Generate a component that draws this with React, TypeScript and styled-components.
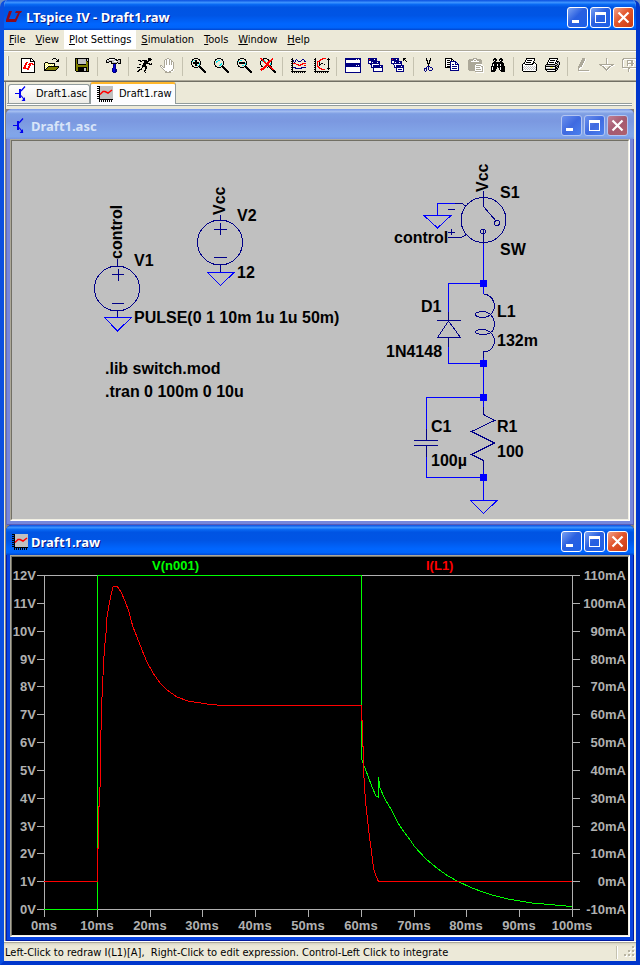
import React from "react";
import styled, { createGlobalStyle, css } from "styled-components";

const GlobalStyle = createGlobalStyle`
  * { box-sizing: border-box; }
  body { margin: 0; background: #6f8fc4; }
  button { font: inherit; color: inherit; margin: 0; padding: 0; border: 0; background: none; }
`;

const Frame = styled.div`
  min-height: 100vh;
  display: flex;
  flex-direction: column;
  overflow: hidden;
  border-radius: 7px 7px 0 0;
  border-style: solid;
  border-width: 0 4px 4px;
  border-color: transparent #0036cc #0036cc #0a4fe0;
  background: #ece9d8;
  font: 11px/14px "DejaVu Sans Condensed", "DejaVu Sans", sans-serif;
  color: #000;
`;

const TitleBar = styled.header<{ $inactive?: boolean; $main?: boolean }>`
  height: 30px;
  display: flex;
  align-items: center;
  gap: ${(p) => (p.$main ? "4px" : "3px")};
  margin: ${(p) => (p.$main ? "0 -4px" : "0")};
  padding: ${(p) => (p.$main ? "4px" : "3px")} 6px 0;
  color: ${(p) => (p.$inactive ? "#d8e4f8" : "#fff")};
  text-shadow: ${(p) => (p.$inactive ? "none" : "1px 1px 0 #0a1883")};
  background: ${(p) =>
    p.$inactive
      ? "linear-gradient(#7697e7 0, #a3bdf0 8%, #7e9ee3 16%, #7b98e0 40%, #82a5e8 80%, #7fa5ea 92%, #7995df)"
      : "linear-gradient(#0a4fe0 0, #3d95ff 9%, #0a6cf5 14%, #0054e3 24%, #0055e5 52%, #0066ff 80%, #0064fa 92%, #0046d0)"};
`;

const TitleText = styled.h1`
  flex: 1;
  margin: 0;
  font: bold 13px/18px "Noto Sans", "Open Sans", sans-serif;
  white-space: nowrap;
`;

const Controls = styled.div`
  display: flex;
  gap: 2px;
`;

const ControlButton = styled.button<{ $kind: "plain" | "close"; $inactive?: boolean }>`
  width: 21px;
  height: 21px;
  display: block;
  border-radius: 3px;
  border: 1px solid ${(p) => (p.$inactive ? "#b4c6f2" : "#fff")};
  background: ${(p) => {
    if (p.$kind === "close")
      return p.$inactive
        ? "linear-gradient(135deg, #c08094, #a45a70 50%, #b0606c)"
        : "linear-gradient(135deg, #f0a088, #e2552c 45%, #cc3a10)";
    return p.$inactive
      ? "linear-gradient(135deg, #6b90ec, #3f6ae0 50%, #4a80ee)"
      : "linear-gradient(135deg, #7ba2f2, #2a60e0 45%, #1c60e8)";
  }};
  svg { display: block; }
`;

const MenuBar = styled.nav`
  height: 20px;
  display: flex;
  align-items: stretch;
`;

const MenuItem = styled.button<{ $open?: boolean }>`
  height: 19px;
  padding: 0 5px;
  white-space: nowrap;
  background: ${(p) => (p.$open ? "#fff" : "transparent")};
  &::first-letter { text-decoration: underline; }
`;

const Toolbar = styled.div`
  height: 32px;
  display: flex;
  align-items: center;
  overflow: hidden;
  padding-left: 3px;
  border: solid #aca899;
  border-width: 1px 0;
  box-shadow: inset 0 1px 0 #fff, inset 0 -1px 0 #aca899;
  border-bottom-color: #716f64;
`;

const Grip = styled.div`
  flex: none;
  width: 2px;
  height: 20px;
  margin-right: 9px;
  border-left: 1px solid #fff;
  border-right: 1px solid #aca899;
`;

const ToolButton = styled.button`
  flex: none;
  width: 23px;
  height: 22px;
  padding-left: 3px;
  svg { display: block; }
`;

const ToolDivider = styled.div`
  flex: none;
  width: 8px;
  height: 19px;
  border-left: 2px solid transparent;
  background: linear-gradient(90deg, #c5c2b0 1px, transparent 1px) content-box;
`;

const Workspace = styled.main`
  flex: 1;
  margin: 0 1px;
  border-left: 1px solid #808080;
  border-right: 1px solid #f1efe2;
`;

const TabStrip = styled.div`
  height: 24px;
  display: flex;
  align-items: flex-end;
  margin: 0 2px 3px 1px;
  padding-left: 1px;
  border-bottom: 1px solid #919b9c;
  box-shadow: inset 0 -1px 0 #fff, inset 0 -2px 0 #919b9c;
`;

const Tab = styled.button<{ $active?: boolean }>`
  height: 19px;
  width: 82px;
  display: flex;
  align-items: center;
  gap: 6px;
  padding-left: 5px;
  margin-bottom: 2px;
  white-space: nowrap;
  border: 1px solid #919b9c;
  border-bottom: 0;
  border-radius: 3px 3px 0 0;
  background: linear-gradient(#fff, #ecebe6);
  ${(p) =>
    p.$active &&
    css`
      height: 22px;
      width: 86px;
      padding-left: 6px;
      margin-bottom: 1px;
      background: #fcfcfe;
      border-top: 2px solid #ffb62a;
    `}
`;

const MdiArea = styled.div`
  background: #808080;
`;

const Child = styled.section<{ $inactive?: boolean }>`
  border-radius: 6px 6px 0 0;
  overflow: hidden;
  background: ${(p) => (p.$inactive ? "#7586dc" : "#0843e0")};
  box-shadow: inset 1px 0 0 ${(p) => (p.$inactive ? "#5d6ac8" : "#0019b0")},
    inset -1px -1px 0 ${(p) => (p.$inactive ? "#5a5cb8" : "#0019a0")};
`;

const ChildBody = styled.div<{ $dark?: boolean }>`
  margin: 0 4px 4px;
  border: 1px solid;
  border-color: #aca899 #fff #fff #aca899;
  background: ${(p) => (p.$dark ? "#000" : "#c0c0c0")};
`;

const Sunken = styled.div`
  border: 1px solid;
  border-color: #716f64 #f1efe2 #f1efe2 #716f64;
`;

const Canvas = styled.svg`
  display: block;
  width: 100%;
  height: auto;
`;

const SchematicLabel = styled.text`
  font: bold 16px "Liberation Sans", Arial, sans-serif;
  fill: #000;
`;

const PlotLabel = styled.text<{ $color?: string }>`
  font: bold 13px "Liberation Sans", Arial, sans-serif;
  fill: ${(p) => p.$color || "#b0b0b0"};
`;

const StatusBar = styled.footer`
  height: 20px;
  display: flex;
  align-items: center;
  justify-content: space-between;
  padding: 3px 0 1px 1px;
  white-space: pre;
  border-top: 1px solid #fff;
  box-shadow: inset 0 1px 0 #aca899, inset 0 3px 3px -1px #cfccba;
`;

const StatusEnd = styled.div`
  display: flex;
  gap: 6px;
`;

const StatusRule = styled.div`
  width: 2px;
  height: 13px;
  border-left: 1px solid #c5c2b0;
  border-right: 1px solid #fff;
`;

const PALETTE: Record<string, string> = {
  k: "#000", n: "#000080", r: "#f00", w: "#fff", y: "#ffff60", o: "#808000",
  g: "#808080", s: "#c0c0c0", c: "#00e8f0", b: "#0000e0", t: "#aca899",
};

function PixelIcon({ rows }: { rows: string[] }) {
  const rects: React.ReactNode[] = [];
  rows.forEach((row, y) => {
    let x = 0;
    while (x < row.length) {
      const c = row[x];
      let end = x + 1;
      while (end < row.length && row[end] === c) end++;
      if (PALETTE[c]) rects.push(<rect key={`${x}-${y}`} x={x} y={y} width={end - x} height={1} fill={PALETTE[c]} />);
      x = end;
    }
  });
  return (
    <svg width="16" height="16" viewBox="0 0 16 16" shapeRendering="crispEdges" aria-hidden="true">
      {rects}
    </svg>
  );
}

const lens = (inside: string[]) => [
  "...kkkk.........",
  ".kk....kk.......",
  ".k" + inside[0] + "k.......",
  "k" + inside[1] + "k......",
  "k" + inside[2] + "k......",
  "k" + inside[3] + "k......",
  "k" + inside[4] + "k......",
  ".k" + inside[5] + "k.......",
  ".kk....kkk......",
  "...kkkk.kkk.....",
  ".........kkk....",
  "..........kkk...",
  "...........kkk..",
  "............kkk.",
  ".............kk.",
];

const ICONS: Record<string, string[]> = {
  new: [
    "kkkkkkkkkkk.....", "kwwwwwwwwkwk....", "kwwwwwwwwkwwk...", "kwwwwwwwwkkkkk..",
    "kwwwwrrwwwwwwk..", "kwwwrrwwrrrrwk..", "kwwwrrwrrrwrrk..", "kwwrrwwwrrwwwk..",
    "kwwrrwwrrwwwwk..", "kwrrrwwrrwwwwk..", "kwrrrrrrwwwwwk..", "kwwwwwrrwwwwwk..",
    "kwwwwwwwwwwwwk..", "kwwwwwwwwwwwwk..", "kkkkkkkkkkkkkk..",
  ],
  open: [
    ".........kkk....", "........k...k.k.", ".............kk.", "............kkk.",
    ".kkk............", "kywykkkkkkk.....", "kwywywywywk.....", "kywywywywyk.....",
    "kwywkkkkkkkkkkk.", "kywkooooooooook.", "kwkooooooooook..", "kkooooooooook...",
    "kkkkkkkkkkkk....",
  ],
  save: [
    "kkkkkkkkkkkkkk..", "kokssssssssksk..", "kokssssssssksk..", "kokssssssssokk..",
    "kokssssssssook..", "kokssssssssook..", "kookkkkkkkkook..", "kooooooooooook..",
    "kooooooooooook..", "kookkkkkkkkkok..", "kookkkkkksskok..", "kookkkkkksskok..",
    "kookkkkkksskok..", ".kkkkkkkkkkkkk..",
  ],
  hammer: [
    "...kkkkkk.......", ".kkwwwwwskk.kkk.", "kwsssssssskkssk.", "ksskkksswwwsssk.",
    "kkk..kssssskssk.", ".....kkkkkk.kkk.", ".......nbn......", ".......nbn......",
    ".......nbn......", ".......nbn......", "......nbbn......", "......nbbnn.....",
    "......nbbnn.....", "......nbbnn.....", ".......nnn......",
  ],
  run: [
    "...........kkk..", "...........kkkk.", ".kkk.kkkkk.kkk..", "...kk..kkkkk....",
    ".......kkkk.....", "......kkkkkkk.k.", "..kk..kkk...kkk.", ".....kkkk.......",
    ".....kkkkk......", "kkk..k..kk......", "....k...kk......", "..kkk...k.......",
    ".kk....kk.......", "kk.....k........", "........k.......",
  ],
  hand: [
    ".......tt.......", ".....ttwwtt.....", "....twtwwtwt....", "....twtwwtwtt...",
    "....twtwwtwtwt..", "....twtwwtwtwt..", "....twtwwtwtwt..", "tt..twwwwwwwwt..",
    "twt.twwwwwwwwt..", ".twttwwwwwwwwt..", "..twwwwwwwwwwt..", "...twwwwwwwwtw..",
    "....twwwwwwttw..", ".....ttwwttww...", ".....tttttt.....",
  ],
  zoomIn: lens([".ckk..", "c..kk...", ".kkkkkk.", ".kkkkkkc", "...kk..c", "..kkc."]),
  zoomOut: lens([".cc...", "c.......", ".kkkkkk.", ".kkkkkkc", ".......c", "...cc."]),
  zoomArea: lens(["..cc..", ".cc.....", ".c......", "......c.", ".....cc.", "...cc."]),
  zoomFit: [
    "rr.kkkk.....r...", ".rrk...kk..rr...", ".krrc...krrr....", "k.crrc..rrrk....",
    "k...rr.rrr.k....", "k....rrrr.ck....", "k.....rrr.ck....", ".k...rrrrrk.....",
    ".kk.rrr.krrk....", "...rrr.k.krr....", ".rrrr.....krr...", "rrrr.......krr..",
    ".r..........kkk.", ".............kkk", "..............kk",
  ],
  traces: [
    ".k..............", "kk...n.....nn...", ".kn.n.n...n..n..", "kkn.n..nnn...nn.",
    ".k.n............", "kkrrr......rrrr.", ".k...rrr.rrr....", "kk.....rrr...rr.",
    ".k..............", "kknnn.....nnnnn.", ".k..nnnnnnn.....", "kk..............",
    ".k..............", "kkkkkkkkkkkkkkk.", ".k.k.k.k.k.k.k..",
  ],
  autorange: [
    ".k......rrrr..k.", "kk....rrr....kkk", ".k...rr.......k.", "kk.rrr........k.",
    ".k.r.k........k.", "kk.r.k.kk.....k.", ".k.r.kk...k...k.", "kk.r.k........k.",
    ".k.rr.........k.", "kk..rr........k.", ".k...rrr.....kkk", "kk.....rrrr...k.",
    ".k..............", "kkkkkkkkkkkkkkk.", ".k.k.k.k.k.k.k..",
  ],
  tile: [
    "nnnnnnnnnnnnnnnn", "nnnnnnnnnnnwnwnn", "nwwwwwwwwwwwwwwn", "nwwwwwwwwwwwwwwn",
    "nwwwwwwwwwwwwwwn", "nnnnnnnnnnnnnnnn", "nnnnnnnnnnnnnnnn", "nnnnnnnnnnnwnwnn",
    "nnnnnnnnnnnnnnnn", "nwwwwwwwwwwwwwwn", "nwwwwwwwwwwwwwwn", "nwwwwwwwwwwwwwwn",
    "nwwwwwwwwwwwwwwn", "nwwwwwwwwwwwwwwn", "nnnnnnnnnnnnnnnn",
  ],
  cascade: [
    "nnnnnnnnn.......", "nrnnnnwnn.......", "nnnnnnnnn.......", "nwwnnnnnnnnn....",
    "nwwnwnnnnwnn....", "nnnnnnnnnnnn....", "..nnwwwwwwwn....", "...nwnnnnnnnnnn.",
    "...nwnnnnnnnwnn.", "...nnnnnnnnnnnn.", ".....nwwwwwwwwn.", ".....nwwwwwwwwn.",
    ".....nwwwwwwwwn.", ".....nnnnnnnnnn.",
  ],
  closeAll: [
    "nnnnnnnn....kkk.", "nrnnnwnn....kk..", "nnnnnnnn....k.k.", "nwwnnnnnnnn....k",
    "nwwnwnnnwnn.....", "nnnnnnnnnnn.....", "..nwwwwwwwn.....", "...nwnnnnnnnn...",
    "...nwnnnnnwnn...", "...nnnnnnnnnn...", ".....nwwwwwwn...", ".....nwnnnnwn...",
    ".....nwwwwwwn...", ".....nnnnnnnn...",
  ],
  cut: [
    "....k...k.......", "....k...k.......", "....kk.kk.......", ".....k.k........",
    ".....k.k........", ".....kkk........", "......k.........", "......k.........",
    ".....nnn........", "....n.n.nn......", "..nnn.n...n.....", "..n.n.n...n.....",
    "..n.n..nnn......", "...n............",
  ],
  copy: [
    "kkkkkkk.........", "kwwwwwkk........", "kwkkkwkwk.......", "kwwwwnnnnnn.....",
    "kwkkknwwwwnn....", "kwwwwnwwwwnwn...", "kwkkknwnnwnnnn..", "kwwwwnwwwwwwwn..",
    "kwkkknwnnnnnwn..", "kkkkknwwwwwwwn..", ".....nwnnnnnwn..", ".....nwwwwwwwn..",
    ".....nnnnnnnnn..",
  ],
  paste: [
    ".....tttt.......", ".tttttwwttttt...", "tttttwttwttttt..", "tttwwwwwwwwttt..",
    "tttttttttttttt..", "tttttttttttttt..", "ttttttttwwwwww..", "tttttttwtttttww.",
    "tttttttwwwwwwttw", "tttttttwttttwwtw", "tttttttwwwwwwwtw", "tttttttwtttttwtw",
    ".ttttttwwwwwwwtw", ".......ttttttttw", "........wwwwwwww",
  ],
  find: [
    "...kk....kk.....", "..kkkk..kkkk....", "..kwkk..kwkk....", "...kk....kk.....",
    "..kkkkkkkkkk....", ".kkkkkkkkkkkk...", ".kwkkkwkkwkkk...", ".kwkkkwkkwkkk...",
    "kkkkkkkkkkkkkk..", "kwkkkk.kkwkkkk..", "kwkkkk..kwkkkk..", "kwkkk...kwkkkk..",
    "kkkkk....kkkkk..", "kkkk......kkkk..",
  ],
  print: [
    "....kkkkkkkkk...", "....kwwwwwwwk...", "...kwkkkkkwwk...", "...kwwwwwwwk....",
    "..kwkkkkkwwkk...", ".kkwwwwwwwkkwk..", "kwwkkkkkkkkwwwk.", "kwwwwwwwwwwwwwk.",
    "kwswswswswswswk.", "kswswswswswswsk.", "kwswswswswswswk.", "kswswswswswswsk.",
    "kwwwwwwwwwwwwwk.", ".kkkkkkkkkkkkk..",
  ],
  preview: [
    "....kkkkkkkkk...", "....kwwwwwwwk...", "...kwkkkkkwk....", "...kwwwwwwwkkk..",
    "..kwkkkkkwkwksk.", "..kwwwwwwwkkssk.", ".kkkkkkkkkssksk.", "kssssssssskksk..",
    "kkkkkkkkkkkskk..", "kwwwwyyywwkksk..", "kssssssssskkk...", "kkkkkkkkkkksk...",
    ".kwwwwwwwwkk....", "..kkkkkkkkk.....",
  ],
  wire: [
    "......ttt.......", "......tttw......", ".....ttttw......", ".....tttw.......",
    "....ttttw.......", "....tttw........", "...ttttw........", "...tttw.........",
    "..ttttw.........", "..ttww..........", "..tww...........", "..tw............",
    "..ttttttttttt...", "...wwwwwwwwwww..",
  ],
  ground: [
    ".......t........", ".......tw.......", ".......tw.......", ".......tw.......",
    ".......tw.......", ".......tw.......", "ttttttttttttttt.", ".ttwwwwwwwwwttww",
    "...ttw....ttww..", "....ttw..ttw....", ".....ttwttw.....", "......tttw......",
    ".......tw.......",
  ],
  label: [
    ".ttttttttttttttt", "ttwwwwwwwwwwwwtt", "tw...tttttt..wtw", "tw...twwwttw..tw",
    "tw...tw..ttw..tw", "tw...tttttttw.tw", "tw...twwwttw..tw", "tw...tw..ttw..tw",
    "tw....w...ww..tw", "ttttttttttttttt.", ".wwwwwttwwwwwwww", "......tw........",
    "......tw........", "......tw........",
  ],
};

const TOOLS: [string, string][][] = [
  [["new", "New"], ["open", "Open"]],
  [["save", "Save"]],
  [["hammer", "Control Panel"]],
  [["run", "Run"], ["hand", "Halt"]],
  [["zoomIn", "Zoom in"], ["zoomArea", "Zoom area"], ["zoomOut", "Zoom out"], ["zoomFit", "Zoom to fit"]],
  [["traces", "Visible traces"], ["autorange", "Autorange"]],
  [["tile", "Tile windows"], ["cascade", "Cascade windows"], ["closeAll", "Close windows"]],
  [["cut", "Cut"], ["copy", "Copy"], ["paste", "Paste"], ["find", "Find"]],
  [["print", "Print setup"], ["preview", "Print"]],
  [["wire", "Wire"], ["ground", "Ground"], ["label", "Label net"]],
];

const MENUS = ["File", "View", "Plot Settings", "Simulation", "Tools", "Window", "Help"];

function Logo() {
  return (
    <svg width="16" height="16" viewBox="0 0 16 16" aria-hidden="true">
      <path d="M3 2H6L3 10H9L12 4H9L10 2H16L15 4H14L10 13H0V11Z" fill="#8b0a1e" />
    </svg>
  );
}

function SchematicIcon() {
  return (
    <svg width="16" height="16" viewBox="0 0 16 16" fill="none" stroke="#0000f0" aria-hidden="true">
      <path d="M1 7.5H5" shapeRendering="crispEdges" />
      <path d="M6 3V12" strokeWidth="2" shapeRendering="crispEdges" />
      <path d="M7 5L11 0.5M7 9.5L11 14.5" strokeWidth="1.2" />
      <path d="M11 11V15H7.500Z" fill="#0000f0" stroke="none" />
    </svg>
  );
}

function PlotIcon() {
  return (
    <svg width="16" height="16" viewBox="0 0 16 16" aria-hidden="true">
      <rect x="2" width="14" height="14" fill="#c0c0c0" />
      <path d="M2.5 0V14M2 13.5H16" stroke="#000" shapeRendering="crispEdges" />
      <path d="M1 0V14" stroke="#000" strokeWidth="2" strokeDasharray="1 1" />
      <path d="M2 15H16" stroke="#000" strokeWidth="2" strokeDasharray="1 1" />
      <path d="M3 8.5L6 5.500H8L11 7L15 4" stroke="#f00" strokeWidth="1.5" fill="none" />
    </svg>
  );
}

function WindowControls({ inactive }: { inactive?: boolean }) {
  return (
    <Controls>
      <ControlButton $kind="plain" $inactive={inactive} aria-label="Minimize">
        <svg width="19" height="19"><rect x="4" y="12" width="7" height="3" fill="#fff" /></svg>
      </ControlButton>
      <ControlButton $kind="plain" $inactive={inactive} aria-label="Maximize">
        <svg width="19" height="19">
          <path d="M4 4H15V15H4ZM5 7V14H14V7Z" fill="#fff" fillRule="evenodd" />
        </svg>
      </ControlButton>
      <ControlButton $kind="close" $inactive={inactive} aria-label="Close">
        <svg width="19" height="19"><path d="M4.5 4.5L14.5 14.5M14.5 4.5L4.5 14.5" stroke="#fff" strokeWidth="2.2" /></svg>
      </ControlButton>
    </Controls>
  );
}

const Node = ({ y }: { y: number }) => <rect x="480" y={y - 3} width="7" height="7" fill="#00f" />;

function Schematic() {
  return (
    <Canvas viewBox="12 141 616 378" role="img" aria-label="Draft1.asc schematic">
      <g fill="none" stroke="#0000ff" shapeRendering="crispEdges">
        <path d="M104.5 317.5H131.5L117.5 331Z M207.5 272.5H234L220.5 285.5Z" />
        <path d="M455 203.5H437.5V215.5M424 215.5H451L437.5 228Z" />
        <path d="M483.5 243V294M483.5 283.5H448.5V312M448.5 346V363.5H483.5M483.5 357V408" />
        <path d="M483.5 397.5H426.5V430M426.5 456V477.5H483.5M483.5 468V500.5M470.5 500.5H497L483.5 513.5Z" />
      </g>
      <g fill="none" stroke="#000088" shapeRendering="crispEdges">
        <circle cx="117" cy="288.5" r="22.5" />
        <circle cx="220" cy="242.5" r="22.5" />
        <circle cx="483.5" cy="220" r="22.5" />
        <path d="M117.5 259V266M117.5 311V317M112 274.5H124M118.5 269V281M112 303.5H124" />
        <path d="M220.5 215V220M220.5 265V272M214 229.5H227M220.5 223V235M214 257.5H227" />
        <path d="M483.5 191V206.5L496 221M455 203.5H462L466.5 206.5M448 209.5H455" />
        <path d="M448 232.5H455M451.5 229V235M448 237.5H461L466.5 234.5" />
        <circle cx="497" cy="223" r="2.5" />
        <circle cx="483" cy="231.5" r="2.5" />
        <path d="M483.5 230V244" />
        <path d="M448.5 312V321M437 320.5H461M448.5 321L437.5 337.5H460.5ZM448.5 338V347" />
        <path d="M483.5 294.5H486C492 296 494.5 302 494.5 306C494.5 311 491 317 483 317.5C473 317 473 312 483 311.5C491 312 494.5 319 494.5 323.5C494.5 330 491 334.5 483 334.5C473 334 473 329.5 483 329.5C491 330 494.5 337 494.5 341C494.5 345 492 350 487 351.5H483.5V358" />
        <path d="M426.5 429V440.5M414 440.5H438M414 445.5H438M426.5 446V457" />
        <path d="M483.5 407V414.5L494.5 420.5L471.5 431.5L494.5 443L471.5 454.5L483.5 460.5V470" />
      </g>
      <Node y={283} />
      <Node y={363} />
      <Node y={397} />
      <Node y={477} />
      <SchematicLabel transform="translate(122 259) rotate(-90)">control</SchematicLabel>
      <SchematicLabel x="134" y="266">V1</SchematicLabel>
      <SchematicLabel x="134" y="323">PULSE(0 1 10m 1u 1u 50m)</SchematicLabel>
      <SchematicLabel transform="translate(225 215) rotate(-90)">Vcc</SchematicLabel>
      <SchematicLabel x="237" y="221">V2</SchematicLabel>
      <SchematicLabel x="237" y="278">12</SchematicLabel>
      <SchematicLabel x="105" y="374">.lib switch.mod</SchematicLabel>
      <SchematicLabel x="105" y="397">.tran 0 100m 0 10u</SchematicLabel>
      <SchematicLabel transform="translate(488 192) rotate(-90)">Vcc</SchematicLabel>
      <SchematicLabel x="500" y="198">S1</SchematicLabel>
      <SchematicLabel x="394" y="243">control</SchematicLabel>
      <SchematicLabel x="500" y="255">SW</SchematicLabel>
      <SchematicLabel x="421" y="312">D1</SchematicLabel>
      <SchematicLabel x="386" y="357">1N4148</SchematicLabel>
      <SchematicLabel x="497" y="317">L1</SchematicLabel>
      <SchematicLabel x="497" y="346">132m</SchematicLabel>
      <SchematicLabel x="431" y="432">C1</SchematicLabel>
      <SchematicLabel x="431" y="466">100µ</SchematicLabel>
      <SchematicLabel x="497" y="432">R1</SchematicLabel>
      <SchematicLabel x="497" y="457">100</SchematicLabel>
    </Canvas>
  );
}

const VOLTAGE =
  "44,909.5 97.5,909.5 97.5,575.5 361.5,575.5 361.5,757 362.5,762 365,768 372,787 376,796 378.5,797.5 378.5,777 379.5,785 380,788 385,799 392,811 398,823 404,832 411,841 414,846 426,859 438,869 448,876 458,881.5 472,888 490,894.5 508,899 532,903 555,905 572,906.5";
const CURRENT =
  "44,881.5 97.5,881.5 97.5,849 98.5,848 98.5,807 99.5,806 99.5,788 100.5,786 100.5,731 101.5,729 101.5,708 102.5,687 103.5,665 104.5,648 106,633 107,617 109,605 111,595 113,587 115,586 117,586 121,592 125,601 129,612 130.5,618 133,627 137,637 142,650 147,662 153,673 160,683 167,690 177,697 188,701 207,704 222,705.5 361.5,705.5 361.5,720 362.5,720 362.5,746 363.5,746 363.5,768 364.5,787 365.5,801 367.5,820 369.5,837 371.5,852 373.5,868 376,876 378.5,881.5 572,881.5";

function Plot() {
  const rows = Array.from({ length: 13 }, (_, i) => i);
  const cols = Array.from({ length: 11 }, (_, i) => i);
  const rowY = (i: number) => Math.round(575 + (i * 334) / 12);
  const colX = (i: number) => Math.round(44 + i * 52.8);
  return (
    <Canvas viewBox="12 557 616 378" role="img" aria-label="Draft1.raw waveforms">
      <g fill="none" stroke="#b0b0b0" shapeRendering="crispEdges">
        <path d="M44.5 575.5H572.5V909.5H44.5Z" />
        {rows.map((i) => (
          <path key={i} d={`M37 ${rowY(i) + 0.5}H45M572 ${rowY(i) + 0.5}H580`} />
        ))}
        {cols.map((i) => (
          <path key={i} d={`M${colX(i) + 0.5} 909V917`} />
        ))}
      </g>
      {rows.map((i) => (
        <React.Fragment key={i}>
          <PlotLabel x="36" y={rowY(i) + 5} textAnchor="end">{12 - i}V</PlotLabel>
          <PlotLabel x="626" y={rowY(i) + 5} textAnchor="end">{110 - i * 10}mA</PlotLabel>
        </React.Fragment>
      ))}
      {cols.map((i) => (
        <PlotLabel key={i} x={colX(i)} y="930" textAnchor="middle">{i * 10}ms</PlotLabel>
      ))}
      <polyline points={VOLTAGE} fill="none" stroke="#0f0" shapeRendering="crispEdges" />
      <polyline points={CURRENT} fill="none" stroke="#f00" shapeRendering="crispEdges" />
      <PlotLabel $color="#0f0" x="152" y="570">V(n001)</PlotLabel>
      <PlotLabel $color="#f00" x="426" y="570">I(L1)</PlotLabel>
    </Canvas>
  );
}

function ChildWindow(props: { title: string; inactive?: boolean; dark?: boolean; icon: React.ReactNode; children: React.ReactNode }) {
  return (
    <Child $inactive={props.inactive} aria-label={props.title}>
      <TitleBar $inactive={props.inactive}>
        {props.icon}
        <TitleText as="h2">{props.title}</TitleText>
        <WindowControls inactive={props.inactive} />
      </TitleBar>
      <ChildBody $dark={props.dark}>
        <Sunken>{props.children}</Sunken>
      </ChildBody>
    </Child>
  );
}

function SizeGrip() {
  const dots = [[8, 0], [4, 4], [8, 4], [0, 8], [4, 8], [8, 8]];
  return (
    <svg width="12" height="12" aria-hidden="true">
      {dots.map(([x, y]) => (
        <g key={`${x}-${y}`}>
          <rect x={x + 1} y={y + 1} width="2" height="2" fill="#fff" />
          <rect x={x} y={y} width="2" height="2" fill="#b8b4a2" />
        </g>
      ))}
    </svg>
  );
}

export default function App() {
  return (
    <>
      <GlobalStyle />
      <Frame>
        <TitleBar $main>
          <Logo />
          <TitleText>LTspice IV - Draft1.raw</TitleText>
          <WindowControls />
        </TitleBar>
        <MenuBar>
          {MENUS.map((name) => (
            <MenuItem key={name} $open={name === "Plot Settings"}>{name}</MenuItem>
          ))}
        </MenuBar>
        <Toolbar role="toolbar">
          <Grip />
          {TOOLS.map((group, i) => (
            <React.Fragment key={i}>
              {i > 0 && <ToolDivider />}
              {group.map(([icon, label]) => (
                <ToolButton key={icon} aria-label={label}>
                  <PixelIcon rows={ICONS[icon]} />
                </ToolButton>
              ))}
            </React.Fragment>
          ))}
        </Toolbar>
        <Workspace>
          <TabStrip role="tablist">
            <Tab role="tab" aria-selected="false"><SchematicIcon />Draft1.asc</Tab>
            <Tab role="tab" aria-selected="true" $active><PlotIcon />Draft1.raw</Tab>
          </TabStrip>
          <MdiArea>
            <ChildWindow title="Draft1.asc" inactive icon={<SchematicIcon />}>
              <Schematic />
            </ChildWindow>
            <ChildWindow title="Draft1.raw" dark icon={<PlotIcon />}>
              <Plot />
            </ChildWindow>
          </MdiArea>
        </Workspace>
        <StatusBar>
          <span>{"Left-Click to redraw I(L1)[A],  Right-Click to edit expression. Control-Left Click to integrate"}</span>
          <StatusEnd>
            <StatusRule />
            <SizeGrip />
          </StatusEnd>
        </StatusBar>
      </Frame>
    </>
  );
}
